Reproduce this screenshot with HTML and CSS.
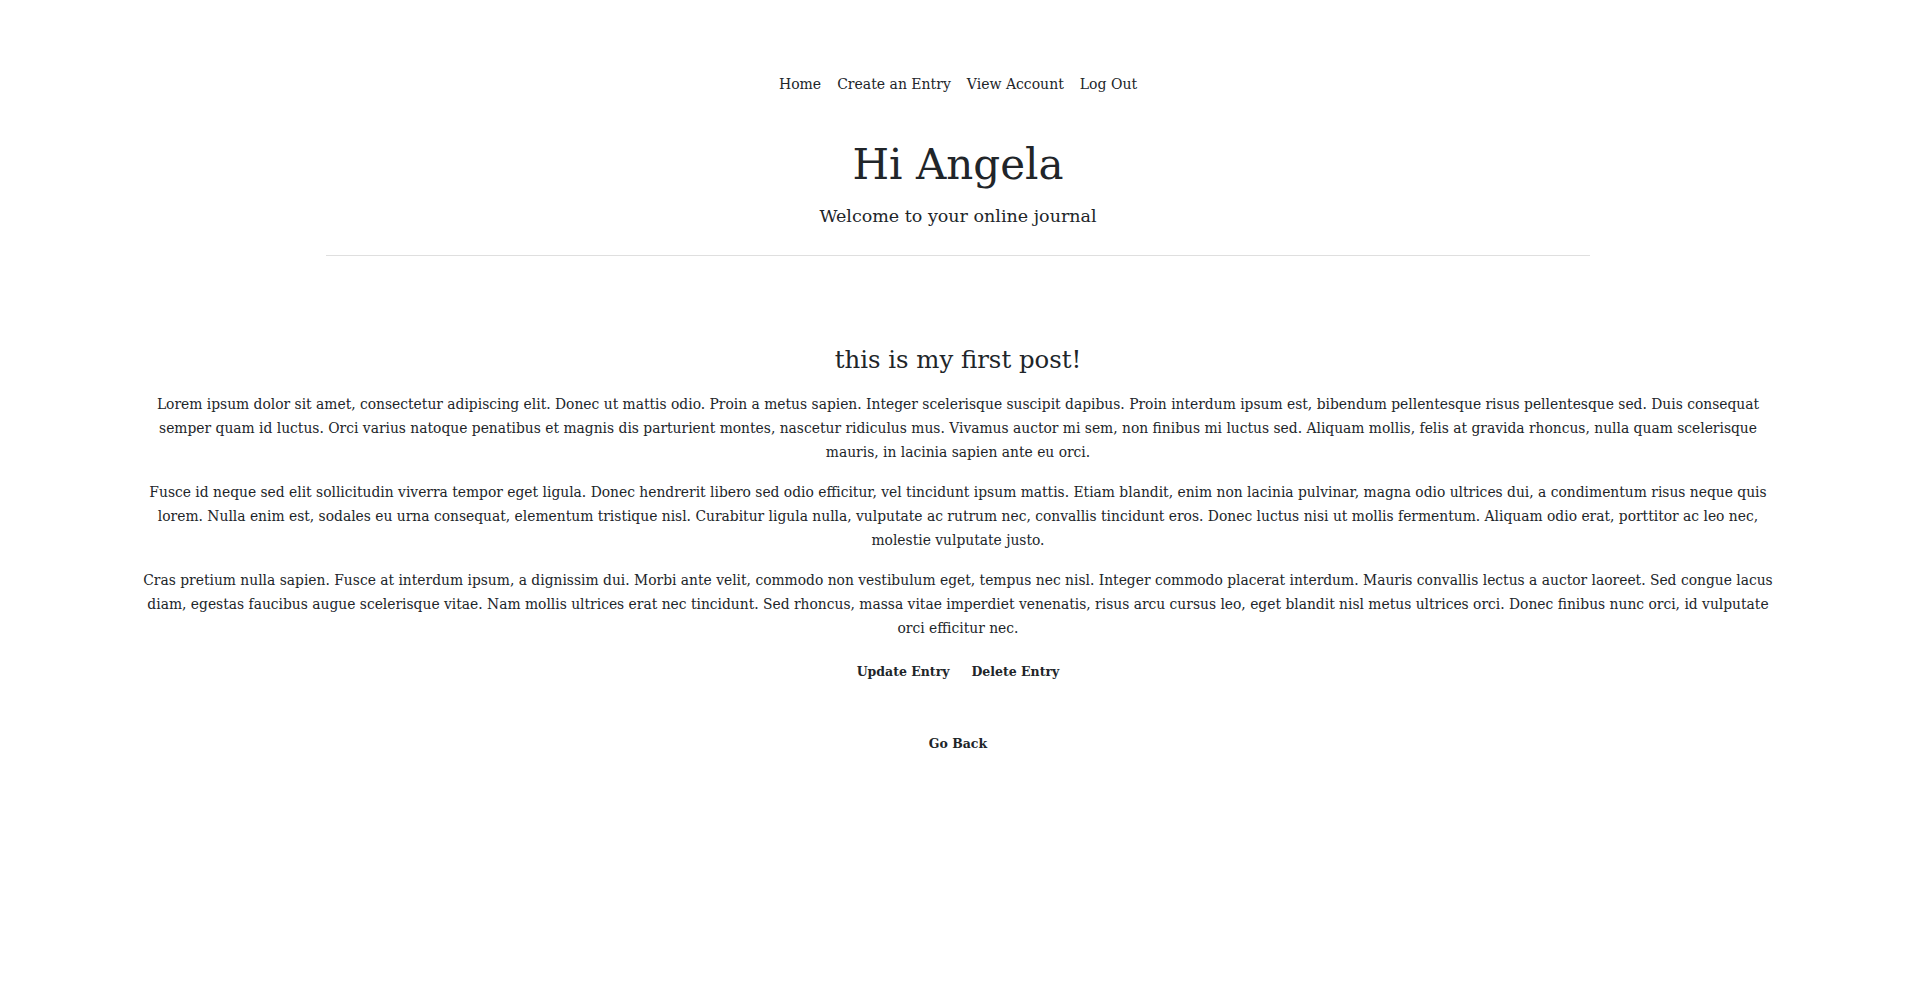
FILE: index.html
```html
<!DOCTYPE html>
<html lang="en">
<head>
<meta charset="utf-8">
<title>Online Journal</title>
<link rel="stylesheet" href="styles.css">
</head>
<body>
<nav class="nav">
  <a class="nav-link" href="#">Home</a>
  <a class="nav-link" href="#">Create an Entry</a>
  <a class="nav-link" href="#">View Account</a>
  <a class="nav-link" href="#">Log Out</a>
</nav>
<header class="header">
  <h1 class="title">Hi Angela</h1>
  <p class="lead">Welcome to your online journal</p>
</header>
<hr class="divider">
<main class="post">
  <h2 class="post-title">this is my first post!</h2>
  <p class="post-text">Lorem ipsum dolor sit amet, consectetur adipiscing elit. Donec ut mattis odio. Proin a metus sapien. Integer scelerisque suscipit dapibus. Proin interdum ipsum est, bibendum pellentesque risus pellentesque sed. Duis consequat<br>semper quam id luctus. Orci varius natoque penatibus et magnis dis parturient montes, nascetur ridiculus mus. Vivamus auctor mi sem, non finibus mi luctus sed. Aliquam mollis, felis at gravida rhoncus, nulla quam scelerisque<br>mauris, in lacinia sapien ante eu orci.</p>
  <p class="post-text">Fusce id neque sed elit sollicitudin viverra tempor eget ligula. Donec hendrerit libero sed odio efficitur, vel tincidunt ipsum mattis. Etiam blandit, enim non lacinia pulvinar, magna odio ultrices dui, a condimentum risus neque quis<br>lorem. Nulla enim est, sodales eu urna consequat, elementum tristique nisl. Curabitur ligula nulla, vulputate ac rutrum nec, convallis tincidunt eros. Donec luctus nisi ut mollis fermentum. Aliquam odio erat, porttitor ac leo nec,<br>molestie vulputate justo.</p>
  <p class="post-text">Cras pretium nulla sapien. Fusce at interdum ipsum, a dignissim dui. Morbi ante velit, commodo non vestibulum eget, tempus nec nisl. Integer commodo placerat interdum. Mauris convallis lectus a auctor laoreet. Sed congue lacus<br>diam, egestas faucibus augue scelerisque vitae. Nam mollis ultrices erat nec tincidunt. Sed rhoncus, massa vitae imperdiet venenatis, risus arcu cursus leo, eget blandit nisl metus ultrices orci. Donec finibus nunc orci, id vulputate<br>orci efficitur nec.</p>
  <div class="actions">
    <a class="action" href="#">Update Entry</a>
    <a class="action" href="#">Delete Entry</a>
  </div>
  <div class="back">
    <a class="action" href="#">Go Back</a>
  </div>
</main>
</body>
</html>
```

FILE: styles.css
```css
html, body {
  margin: 0;
  padding: 0;
  background: #ffffff;
}

body {
  font-family: "DejaVu Serif", "Liberation Serif", serif;
  color: #212529;
  text-align: center;
}

a {
  color: #212529;
  text-decoration: none;
}

.nav {
  display: flex;
  justify-content: center;
  gap: 16px;
  padding-top: 72px;
  height: 24px;
}

.nav-link {
  font-size: 14px;
  line-height: 24px;
}

.header {
  display: flex;
  flex-direction: column;
  align-items: center;
}

.title {
  margin: 44px 0 0;
  font-size: 42px;
  font-weight: normal;
  line-height: 50px;
}

.lead {
  margin: 14px 0 0;
  font-size: 17.5px;
  line-height: 24px;
}

.divider {
  width: 1264px;
  margin: 27px auto 0;
  border: 0;
  border-top: 1px solid #dfdfdf;
  height: 0;
}

.post {
  padding: 0 100px;
}

.post-title {
  margin: 91px 0 19px;
  font-size: 24.4px;
  font-weight: normal;
  line-height: 26px;
}

.post-text {
  margin: 0 0 16px;
  font-size: 13.85px;
  line-height: 24px;
  white-space: nowrap;
}

.actions {
  display: flex;
  justify-content: center;
  gap: 22px;
  margin-top: 22px;
}

.action {
  font-size: 12.5px;
  font-weight: bold;
  line-height: 20px;
}

.back {
  margin-top: 51px;
}
```
